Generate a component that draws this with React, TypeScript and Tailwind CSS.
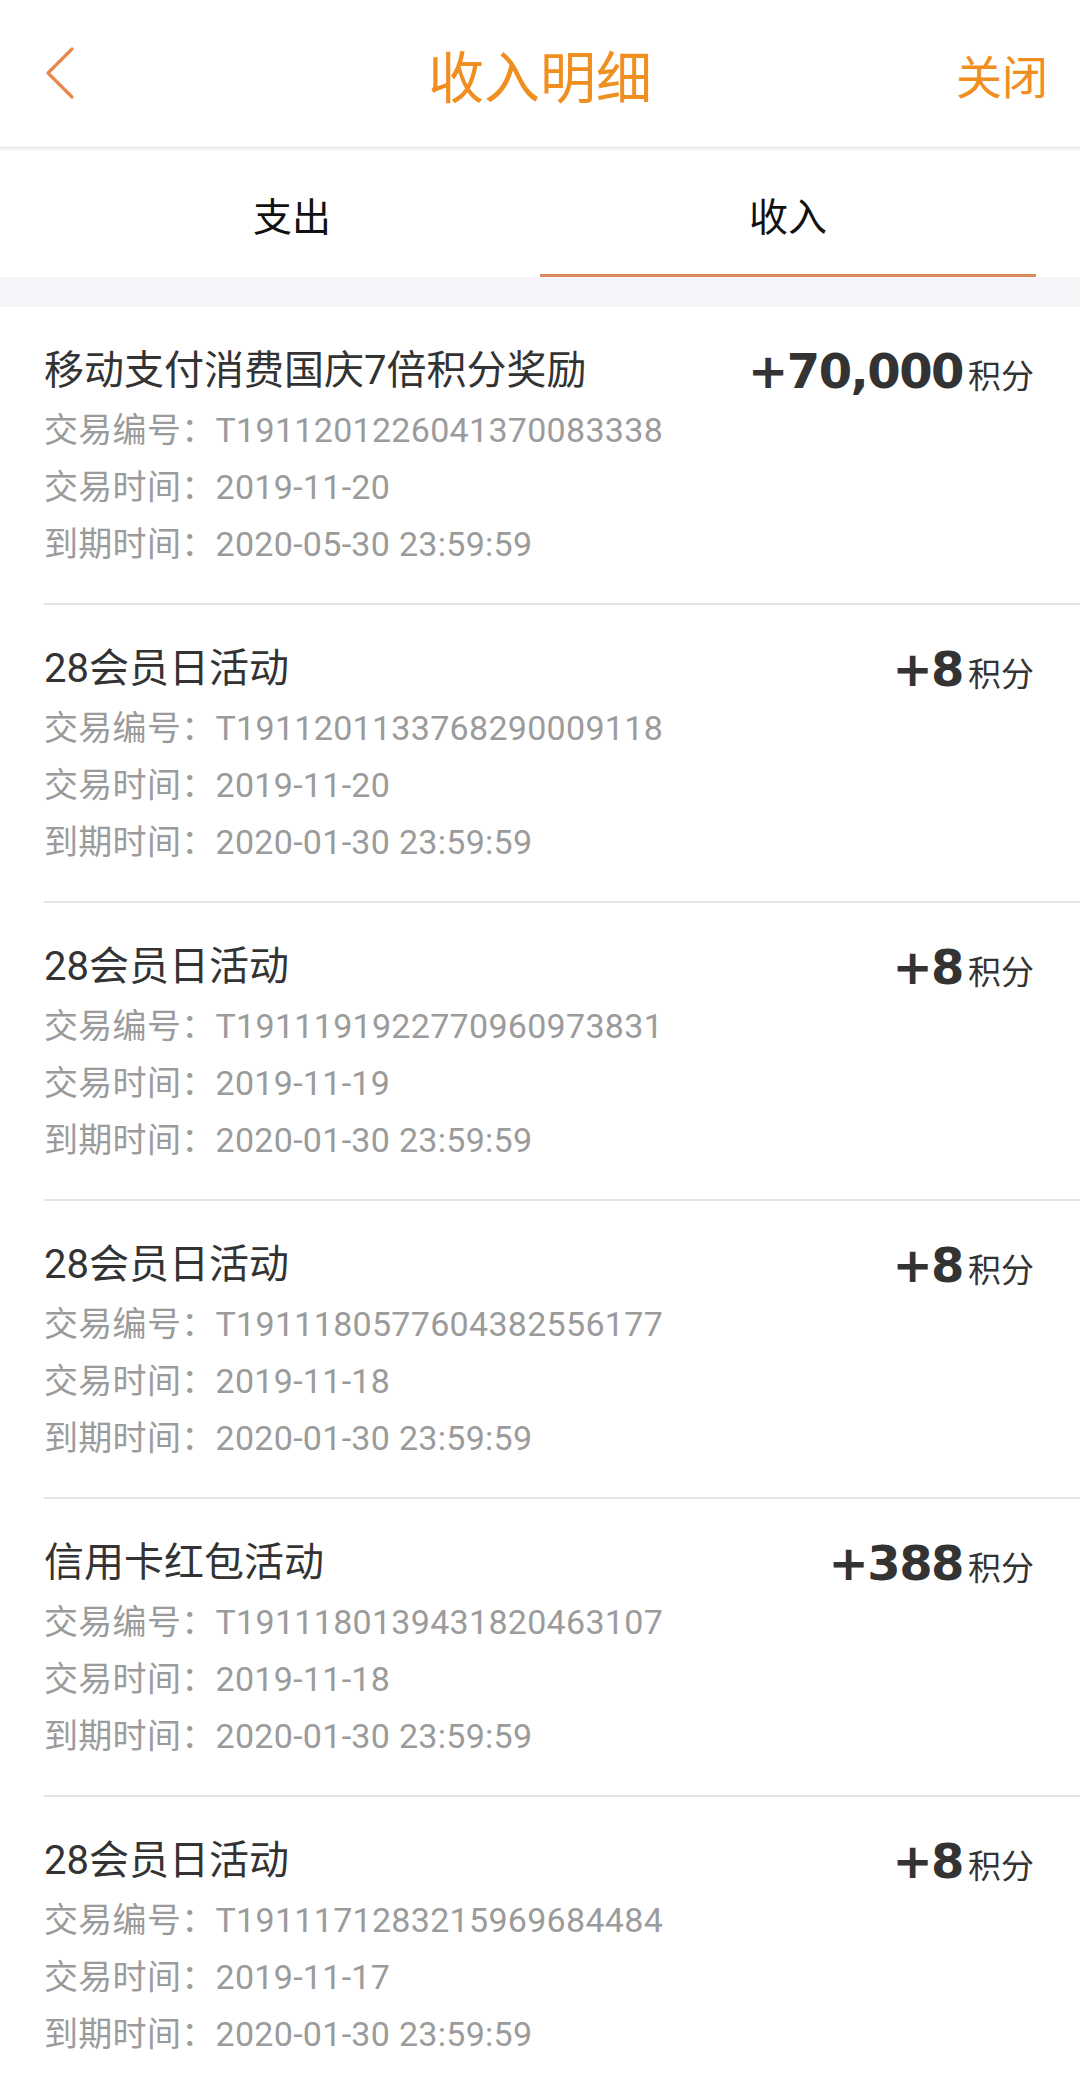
import React from "react";

type Item = {
  title: string;
  no: string;
  date: string;
  expire: string;
  amount: string;
};

const items: Item[] = [
  { title: "移动支付消费国庆7倍积分奖励", no: "T1911201226041370083338", date: "2019-11-20", expire: "2020-05-30 23:59:59", amount: "+70,000" },
  { title: "28会员日活动", no: "T1911201133768290009118", date: "2019-11-20", expire: "2020-01-30 23:59:59", amount: "+8" },
  { title: "28会员日活动", no: "T1911191922770960973831", date: "2019-11-19", expire: "2020-01-30 23:59:59", amount: "+8" },
  { title: "28会员日活动", no: "T1911180577604382556177", date: "2019-11-18", expire: "2020-01-30 23:59:59", amount: "+8" },
  { title: "信用卡红包活动", no: "T1911180139431820463107", date: "2019-11-18", expire: "2020-01-30 23:59:59", amount: "+388" },
  { title: "28会员日活动", no: "T1911171283215969684484", date: "2019-11-17", expire: "2020-01-30 23:59:59", amount: "+8" },
];

const font = { fontFamily: "Roboto, 'Noto Sans CJK SC', sans-serif" };

function Row({ item }: { item: Item }) {
  return (
    <div className="ml-[44px] pr-[46px] pt-[36px] pb-[30px] border-b-2 border-[#e4e4e4] flex justify-between">
      <div className="flex flex-col">
        <div className="h-[56px] leading-[56px] text-[40px] text-[#333333] font-['Roboto','Noto_Sans_CJK_SC',sans-serif]">{item.title}</div>
        <div className="mt-[3px] flex flex-col text-[34px] text-[#9b9b9b] tracking-[0.3px] font-['Roboto','Noto_Sans_CJK_SC',sans-serif]">
          <div className="h-[57px] leading-[57px]">交易编号：{item.no}</div>
          <div className="h-[57px] leading-[57px]">交易时间：{item.date}</div>
          <div className="h-[57px] leading-[57px]">到期时间：{item.expire}</div>
        </div>
      </div>
      <div className="h-[56px] flex items-baseline text-[#333333] whitespace-nowrap">
        <span className="text-[48px] leading-[56px] font-bold font-['DejaVu_Sans',sans-serif] tracking-[-1.5px]">{item.amount}</span>
        <span className="ml-[5px] text-[33px] leading-[56px] font-['Noto_Sans_CJK_SC',sans-serif]">积分</span>
      </div>
    </div>
  );
}

export default function App() {
  return (
    <div className="w-[1080px] min-h-[2087px] bg-white overflow-hidden" style={font}>
      <div className="h-[148px] flex items-center justify-between relative border-b border-[#e3e3e3] bg-white">
        <div className="pl-[44px] w-[200px] flex items-center">
          <svg width="34" height="56" viewBox="0 0 34 56" fill="none">
            <path d="M28 3 L4 27 L28 51" stroke="#e8874c" strokeWidth="3.2" strokeLinecap="round" strokeLinejoin="round" />
          </svg>
        </div>
        <div className="text-[56px] text-[#f08e1f] font-['Noto_Sans_CJK_SC',sans-serif] leading-none">收入明细</div>
        <div className="w-[200px] flex justify-end pr-[32px] text-[46px] text-[#f08e1f] font-['Noto_Sans_CJK_SC',sans-serif] leading-none">关闭</div>
      </div>
      <div className="h-[3px] bg-[#f4f4f6]" />
      <div className="h-[126px] flex px-[44px] bg-white">
        <div className="flex-1 flex items-center justify-center text-[39px] text-[#111111] font-['Noto_Sans_CJK_SC',sans-serif]">支出</div>
        <div className="flex-1 flex items-center justify-center text-[39px] text-[#111111] font-['Noto_Sans_CJK_SC',sans-serif] border-b-[3px] border-[#d98a5a] pt-[3px]">收入</div>
      </div>
      <div className="h-[30px] bg-[#f6f6fa]" />
      <div className="flex flex-col">
        {items.map((it, i) => (
          <Row key={i} item={it} />
        ))}
      </div>
    </div>
  );
}
